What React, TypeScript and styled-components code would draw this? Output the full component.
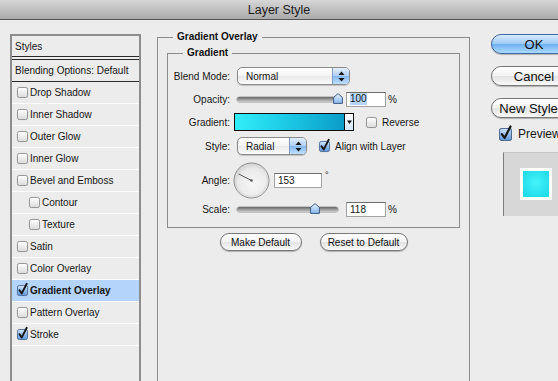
import React from "react";
import styled, { createGlobalStyle } from "styled-components";

const GlobalStyle = createGlobalStyle`
  html, body { margin: 0; padding: 0; }
  body {
    background: #ececec;
    font-family: "Liberation Sans", Arial, sans-serif;
    color: #161616;
    overflow: hidden;
  }
`;

const Window = styled.div`
  width: 558px;
  height: 381px;
  display: flex;
  flex-direction: column;
  overflow: hidden;
  background: #ececec;
`;

const TitleBar = styled.div`
  flex: none;
  height: 20px;
  box-sizing: border-box;
  border-bottom: 1px solid #545454;
  background: linear-gradient(#d7d7d7, #a9a9a9);
  display: flex;
  align-items: center;
  justify-content: center;
  font-size: 12.5px;
  color: #1b1b1b;
`;

const Main = styled.div`
  flex: 1;
  min-height: 0;
  display: flex;
  align-items: stretch;
`;

/* ---------- left styles list ---------- */

const StylesPanel = styled.div`
  flex: none;
  width: 131px;
  box-sizing: border-box;
  margin: 14px 0 0 10px;
  border: 2px solid #8d8d8d;
  border-bottom: none;
  display: flex;
  flex-direction: column;
  font-size: 10px;
`;

const ListHeader = styled.div`
  height: 20px;
  display: flex;
  align-items: center;
  padding-left: 3px;
  border-bottom: 4px double #2a2a2a;
`;

const ListBlending = styled.div`
  height: 21px;
  display: flex;
  align-items: center;
  padding-left: 3px;
  border-bottom: 1px solid #2a2a2a;
`;

const ListItem = styled.div<{ $indent?: boolean; $selected?: boolean }>`
  height: 21px;
  display: flex;
  align-items: center;
  gap: 2px;
  padding-left: ${(p) => (p.$indent ? 17 : 5)}px;
  border-bottom: 1px solid #fbfbfb;
  background: ${(p) => (p.$selected ? "#b4d4fc" : "transparent")};
  font-weight: ${(p) => (p.$selected ? "bold" : "normal")};
`;

/* ---------- checkbox ---------- */

const CheckSvg = styled.svg`
  flex: none;
  overflow: visible;
`;

const CheckBox = ({ checked, size = 11 }: { checked?: boolean; size?: number }) => (
  <CheckSvg width={size} height={size} viewBox="0 0 12 12">
    <defs>
      <linearGradient id="cbOff" x1="0" y1="0" x2="0" y2="1">
        <stop offset="0" stopColor="#ffffff" />
        <stop offset="1" stopColor="#dadada" />
      </linearGradient>
      <linearGradient id="cbOn" x1="0" y1="0" x2="0" y2="1">
        <stop offset="0" stopColor="#d6e7fa" />
        <stop offset="0.5" stopColor="#93bdec" />
        <stop offset="1" stopColor="#5f97da" />
      </linearGradient>
    </defs>
    <rect
      x="0.5"
      y="0.5"
      width="11"
      height="11"
      rx="2"
      fill={checked ? "url(#cbOn)" : "url(#cbOff)"}
      stroke={checked ? "#4c6b95" : "#8b8b8b"}
    />
    {checked && (
      <path
        d="M2.6 5.6 L5.2 9.2 L10.6 -1.4"
        fill="none"
        stroke="#141414"
        strokeWidth="2"
        strokeLinecap="round"
        strokeLinejoin="round"
      />
    )}
  </CheckSvg>
);

/* ---------- middle groups ---------- */

const OuterGroup = styled.fieldset`
  flex: none;
  width: 313px;
  box-sizing: border-box;
  margin: 11px 0 0 16px;
  padding: 0 9px;
  border: 1px solid #8b8b8b;
  border-bottom: none;
  min-width: 0;
`;

const GroupLegend = styled.legend<{ $offset: number }>`
  font-size: 10px;
  font-weight: bold;
  line-height: 12px;
  padding: 0 4px;
  margin-left: ${(p) => p.$offset}px;
  color: #111;
`;

const InnerGroup = styled.fieldset`
  width: 293px;
  box-sizing: border-box;
  margin: 4px 0 0 0;
  padding: 8px 0 10px 0;
  border: 1px solid #8b8b8b;
  min-width: 0;
`;

const Row = styled.div<{ $h: number; $mt: number }>`
  display: grid;
  grid-template-columns: 62px auto;
  column-gap: 7px;
  align-items: center;
  height: ${(p) => p.$h}px;
  margin-top: ${(p) => p.$mt}px;
  &:first-of-type { margin-top: 0; }
`;

const Label = styled.span`
  font-size: 10px;
  text-align: right;
  color: #161616;
  white-space: nowrap;
`;

const Controls = styled.div`
  display: flex;
  align-items: center;
  height: 100%;
  font-size: 10px;
`;

const Select = styled.div<{ $w: number }>`
  width: ${(p) => p.$w}px;
  height: 18px;
  box-sizing: border-box;
  border: 1px solid #8a8a8a;
  border-radius: 5px;
  background: linear-gradient(#ffffff, #f4f4f4 50%, #e9e9e9 51%, #fbfbfb);
  box-shadow: 0 1px 1px rgba(0, 0, 0, 0.18);
  display: flex;
  align-items: center;
  padding-left: 8px;
  overflow: hidden;
  font-size: 10px;
  flex: none;
`;

const Stepper = styled.div`
  margin-left: auto;
  width: 17px;
  height: 100%;
  box-sizing: border-box;
  border-left: 1px solid #7f9cc4;
  background: linear-gradient(#e2eefc, #aecff6 50%, #83b8f1 51%, #bfe0fd);
  display: flex;
  align-items: center;
  justify-content: center;
`;

const StepperArrows = () => (
  <svg width="7" height="11" viewBox="0 0 7 11">
    <path d="M3.5 0.5 L6.5 4 L0.5 4 Z" fill="#151515" />
    <path d="M0.5 7 L6.5 7 L3.5 10.5 Z" fill="#151515" />
  </svg>
);

const SliderWrap = styled.div`
  position: relative;
  width: 101px;
  height: 16px;
  display: flex;
  align-items: center;
  flex: none;
`;

const SliderTrack = styled.div`
  width: 100%;
  height: 5px;
  border-radius: 3px;
  background: linear-gradient(#676767, #9b9b9b 50%, #cdcdcd);
  box-shadow: 0 0 0 0.5px #9a9a9a;
`;

const ThumbSvg = styled.svg`
  position: absolute;
  top: 2px;
`;

const Slider = ({ fraction }: { fraction: number }) => (
  <SliderWrap>
    <SliderTrack />
    <ThumbSvg
      width="10"
      height="11"
      viewBox="0 0 10 11"
      style={{ left: `${fraction * 100.5 - 5}px` }}
    >
      <defs>
        <linearGradient id="thumbG" x1="0" y1="0" x2="0" y2="1">
          <stop offset="0" stopColor="#eaf3fd" />
          <stop offset="1" stopColor="#86b7ee" />
        </linearGradient>
      </defs>
      <path d="M5 0.6 L9.4 4.4 L9.4 10.4 L0.6 10.4 L0.6 4.4 Z" fill="url(#thumbG)" stroke="#3d5b84" />
    </ThumbSvg>
  </SliderWrap>
);

const NumBox = styled.div<{ $w: number; $ml: number }>`
  width: ${(p) => p.$w}px;
  height: 15px;
  box-sizing: border-box;
  margin-left: ${(p) => p.$ml}px;
  border: 1px solid #a2a2a2;
  border-top-color: #6d6d6d;
  background: #fff;
  display: flex;
  align-items: center;
  padding-left: 3px;
  font-size: 10px;
  flex: none;
`;

const Selected = styled.span`
  background: #b5d5ff;
  line-height: 12px;
`;

const Unit = styled.span`
  margin-left: 2px;
  font-size: 10px;
`;

const Degree = styled.span`
  align-self: flex-start;
  margin: 8px 0 0 3px;
  font-size: 9px;
  line-height: 10px;
`;

const Swatch = styled.div`
  width: 120px;
  height: 18px;
  box-sizing: border-box;
  margin-left: -3px;
  border: 1px solid #0f0f0f;
  display: flex;
  flex: none;
`;

const SwatchFill = styled.div`
  flex: 1;
  background: linear-gradient(90deg, #31eef7, #1dcbe6 45%, #0a9cc8);
`;

const SwatchArrow = styled.div`
  width: 8px;
  border-left: 1px solid #0f0f0f;
  background: linear-gradient(#ffffff, #d3e6fb);
  display: flex;
  align-items: center;
  justify-content: center;
`;

const CheckLabel = styled.span<{ $ml: number }>`
  display: flex;
  align-items: center;
  gap: 5px;
  margin-left: ${(p) => p.$ml}px;
  font-size: 10px;
`;

const DialSvg = styled.svg`
  flex: none;
  margin-left: -4px;
`;

const Dial = ({ angle }: { angle: number }) => {
  const r = (angle * Math.PI) / 180;
  const cx = 18.5;
  const cy = 18.5;
  const x2 = cx + Math.cos(r) * 14.5;
  const y2 = cy - Math.sin(r) * 14.5;
  return (
    <DialSvg width="37" height="37" viewBox="0 0 37 37">
      <defs>
        <radialGradient id="dialG" cx="0.55" cy="0.6" r="0.6">
          <stop offset="0" stopColor="#f7f7f7" />
          <stop offset="0.75" stopColor="#e9e9e9" />
          <stop offset="1" stopColor="#cfcfcf" />
        </radialGradient>
      </defs>
      <circle cx={cx} cy={cy} r="17.5" fill="url(#dialG)" stroke="#8e8e8e" />
      <circle cx={cx} cy={cy} r="16" fill="none" stroke="#d9d9d9" />
      <line x1={cx} y1={cy} x2={x2} y2={y2} stroke="#555" strokeWidth="1" />
      <circle cx={cx} cy={cy} r="1.3" fill="#555" />
    </DialSvg>
  );
};

const ButtonRow = styled.div`
  display: flex;
  justify-content: center;
  gap: 18px;
  margin-top: 5px;
`;

const PillButton = styled.div<{ $w: number; $h?: number; $fs?: number; $primary?: boolean }>`
  width: ${(p) => p.$w}px;
  height: ${(p) => p.$h ?? 18}px;
  box-sizing: border-box;
  flex: none;
  border-radius: 10px;
  border: 1px solid ${(p) => (p.$primary ? "#3f689f" : "#777")};
  background: ${(p) =>
    p.$primary
      ? "linear-gradient(#d9ebfd, #9dcaf7 48%, #70b0f2 52%, #a9dbfd)"
      : "linear-gradient(#ffffff, #f2f2f2 50%, #e3e3e3 52%, #f9f9f9)"};
  box-shadow: 0 1px 1px rgba(0, 0, 0, 0.25);
  display: flex;
  align-items: center;
  justify-content: center;
  font-size: ${(p) => p.$fs ?? 10}px;
  color: #111;
  white-space: nowrap;
  overflow: hidden;
`;

/* ---------- right column ---------- */

const RightColumn = styled.div`
  flex: none;
  margin: 14px 0 0 21px;
  display: flex;
  flex-direction: column;
  align-items: flex-start;
`;

const Gap = styled.div<{ $h: number }>`
  height: ${(p) => p.$h}px;
  flex: none;
`;

const PreviewRow = styled.div`
  display: flex;
  align-items: center;
  gap: 6px;
  height: 14px;
  margin-left: 8px;
  font-size: 12px;
`;

const PreviewBox = styled.div`
  width: 60px;
  height: 64px;
  box-sizing: border-box;
  margin-left: 12px;
  background: #d7d7d7;
  border-left: 1px solid #7e7e7e;
  border-top: 1px solid #c6c6c6;
  padding: 15px 0 0 16px;
`;

const PreviewFrame = styled.div`
  width: 32px;
  height: 32px;
  box-sizing: border-box;
  padding: 3px;
  background: #fff;
`;

const PreviewFill = styled.div`
  width: 100%;
  height: 100%;
  background: radial-gradient(circle at 50% 45%, #44f4fb, #22dbe9 80%);
`;

const styleItems: { name: string; indent?: boolean; checked?: boolean; selected?: boolean }[] = [
  { name: "Drop Shadow" },
  { name: "Inner Shadow" },
  { name: "Outer Glow" },
  { name: "Inner Glow" },
  { name: "Bevel and Emboss" },
  { name: "Contour", indent: true },
  { name: "Texture", indent: true },
  { name: "Satin" },
  { name: "Color Overlay" },
  { name: "Gradient Overlay", checked: true, selected: true },
  { name: "Pattern Overlay" },
  { name: "Stroke", checked: true },
];

export default function App() {
  const opacity = 100;
  const scale = 118;
  return (
    <Window>
      <GlobalStyle />
      <TitleBar>Layer Style</TitleBar>
      <Main>
        <StylesPanel>
          <ListHeader>Styles</ListHeader>
          <ListBlending>Blending Options: Default</ListBlending>
          {styleItems.map((it) => (
            <ListItem key={it.name} $indent={it.indent} $selected={it.selected}>
              <CheckBox checked={it.checked} />
              <span>{it.name}</span>
            </ListItem>
          ))}
        </StylesPanel>

        <OuterGroup>
          <GroupLegend $offset={6}>Gradient Overlay</GroupLegend>
          <InnerGroup>
            <GroupLegend $offset={15}>Gradient</GroupLegend>
            <Row $h={18} $mt={0}>
              <Label>Blend Mode:</Label>
              <Controls>
                <Select $w={113}>
                  Normal
                  <Stepper>
                    <StepperArrows />
                  </Stepper>
                </Select>
              </Controls>
            </Row>
            <Row $h={16} $mt={6}>
              <Label>Opacity:</Label>
              <Controls>
                <Slider fraction={opacity / 100} />
                <NumBox $w={40} $ml={8}>
                  <Selected>{opacity}</Selected>
                </NumBox>
                <Unit>%</Unit>
              </Controls>
            </Row>
            <Row $h={18} $mt={6}>
              <Label>Gradient:</Label>
              <Controls>
                <Swatch>
                  <SwatchFill />
                  <SwatchArrow>
                    <svg width="5" height="4" viewBox="0 0 5 4">
                      <path d="M0 0.5 L5 0.5 L2.5 4 Z" fill="#111" />
                    </svg>
                  </SwatchArrow>
                </Swatch>
                <CheckLabel $ml={12}>
                  <CheckBox />
                  Reverse
                </CheckLabel>
              </Controls>
            </Row>
            <Row $h={18} $mt={6}>
              <Label>Style:</Label>
              <Controls>
                <Select $w={70}>
                  Radial
                  <Stepper>
                    <StepperArrows />
                  </Stepper>
                </Select>
                <CheckLabel $ml={12}>
                  <CheckBox checked />
                  Align with Layer
                </CheckLabel>
              </Controls>
            </Row>
            <Row $h={36} $mt={7}>
              <Label>Angle:</Label>
              <Controls>
                <Dial angle={153} />
                <NumBox $w={48} $ml={4}>
                  153
                </NumBox>
                <Degree>°</Degree>
              </Controls>
            </Row>
            <Row $h={16} $mt={3}>
              <Label>Scale:</Label>
              <Controls>
                <Slider fraction={(scale - 10) / 140} />
                <NumBox $w={40} $ml={8}>
                  {scale}
                </NumBox>
                <Unit>%</Unit>
              </Controls>
            </Row>
          </InnerGroup>
          <ButtonRow>
            <PillButton $w={82}>Make Default</PillButton>
            <PillButton $w={88}>Reset to Default</PillButton>
          </ButtonRow>
        </OuterGroup>

        <RightColumn>
          <PillButton $w={86} $h={20} $fs={13} $primary>
            OK
          </PillButton>
          <Gap $h={12} />
          <PillButton $w={86} $h={20} $fs={13}>
            Cancel
          </PillButton>
          <Gap $h={12} />
          <PillButton $w={86} $h={20} $fs={13}>
            New Style...
          </PillButton>
          <Gap $h={9} />
          <PreviewRow>
            <CheckBox checked size={13} />
            Preview
          </PreviewRow>
          <Gap $h={11} />
          <PreviewBox>
            <PreviewFrame>
              <PreviewFill />
            </PreviewFrame>
          </PreviewBox>
        </RightColumn>
      </Main>
    </Window>
  );
}
